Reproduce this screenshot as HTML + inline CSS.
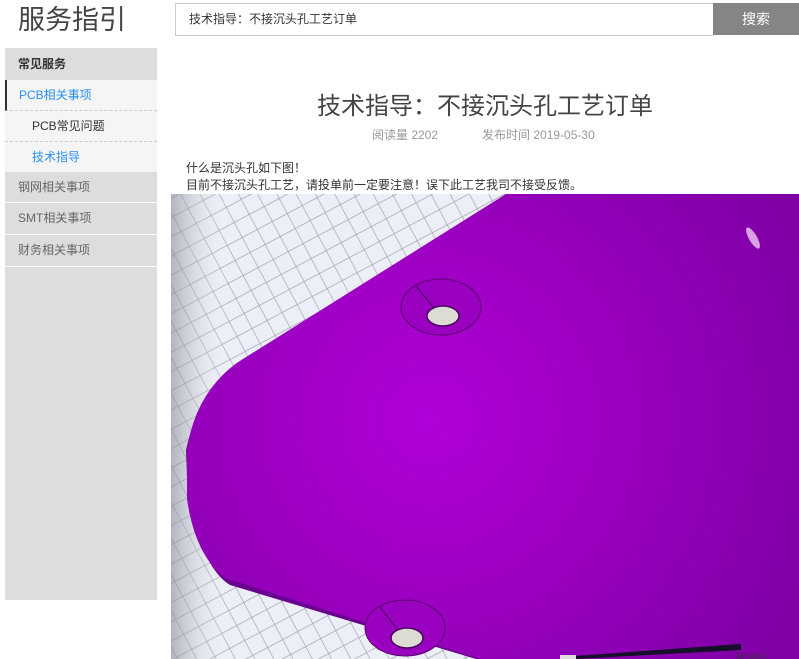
<!DOCTYPE html>
<html><head><meta charset="utf-8"><style>
*{margin:0;padding:0;box-sizing:border-box}
body{width:799px;height:659px;overflow:hidden;background:#fff;font-family:"Liberation Sans","Noto Sans CJK SC",sans-serif;position:relative;color:#333}
.abs{position:absolute}
.logo{left:18px;top:2px;font-size:27px;color:#444;line-height:36px}
.search{left:175px;top:3px;width:539px;height:33px;border:1px solid #ccc;font-size:12px;line-height:31px;padding-left:13px;color:#333}
.btn{left:713px;top:3px;width:86px;height:32px;background:#858585;color:#fff;font-size:14px;line-height:32px;text-align:center}
.side{left:5px;top:48px;width:152px;height:552px;background:#ddd}
.it{position:absolute;left:0;width:152px;font-size:12px;padding-left:13px}
.title{left:171px;width:628px;top:90px;text-align:center;font-size:24px;color:#444;line-height:34px}
.meta{top:127px;left:372px;font-size:12px;color:#999;line-height:16px}
.txt{left:186px;font-size:12px;line-height:16px;color:#333}
</style></head><body>
<div class="abs logo">服务指引</div>
<div class="abs search">技术指导：不接沉头孔工艺订单</div>
<div class="abs btn">搜索</div>
<div class="abs side">
<div class="it" style="top:1px;height:30px;line-height:30px;font-weight:bold;color:#333">常见服务</div>
<div class="it" style="top:32px;height:31px;line-height:31px;background:#f5f5f5;color:#2a8ef0;border-left:2px solid #333;padding-left:12px;border-bottom:1px dashed #ccc">PCB相关事项</div>
<div class="it" style="top:63px;height:31px;line-height:31px;background:#f5f5f5;padding-left:27px;border-bottom:1px dashed #ccc">PCB常见问题</div>
<div class="it" style="top:94px;height:30px;line-height:30px;background:#f5f5f5;padding-left:27px;color:#2a8ef0">技术指导</div>
<div class="it" style="top:124px;height:31px;line-height:31px;color:#666;border-bottom:1px solid #fff">钢网相关事项</div>
<div class="it" style="top:155px;height:32px;line-height:31px;color:#666;border-bottom:1px solid #fff">SMT相关事项</div>
<div class="it" style="top:187px;height:32px;line-height:31px;color:#666;border-bottom:1px solid #fff">财务相关事项</div>
</div>
<div class="abs title">技术指导：不接沉头孔工艺订单</div>
<div class="abs meta">阅读量 2202<span style="display:inline-block;width:44px"></span>发布时间 2019-05-30</div>
<div class="abs txt" style="top:160px">什么是沉头孔如下图！</div>
<div class="abs txt" style="top:177px">目前不接沉头孔工艺，请投单前一定要注意！误下此工艺我司不接受反馈。</div>
<svg class="abs" style="left:171px;top:194px" width="628" height="465" viewBox="171 194 628 465">
<defs>
<pattern id="g" width="17" height="17" patternUnits="userSpaceOnUse" patternTransform="rotate(-28)">
<rect width="17" height="17" fill="#eceff8"/>
<path d="M0 0H17M0 0V17" stroke="#a4a6b0" stroke-width="1.4"/>
</pattern>
<radialGradient id="p" cx="430" cy="420" r="420" gradientUnits="userSpaceOnUse">
<stop offset="0" stop-color="#b200d8"/><stop offset="1" stop-color="#7e00a4"/>
</radialGradient>
<linearGradient id="sh" x1="0" y1="0" x2="1" y2="0"><stop offset="0" stop-color="#8a8c96" stop-opacity=".6"/><stop offset="1" stop-color="#fff" stop-opacity="0"/></linearGradient>
</defs>
<rect x="171" y="194" width="628" height="465" fill="url(#g)"/>
<rect x="171" y="194" width="60" height="465" fill="url(#sh)"/>
<path d="M504 199 L799 199 L799 659 L476 659 L230 585 Q205 570 188 505 L186 450 Q200 385 243 359 Z" fill="#6a0090"/>
<path d="M506 194 L799 194 L799 659 L480 659 L225 578 Q195 555 187 499 L187 451 Q195 390 243 359 Z" fill="url(#p)"/>
<ellipse cx="441" cy="307" rx="40" ry="28" fill="#9a00c0" stroke="#5a0070" stroke-width="1"/>
<ellipse cx="443" cy="316" rx="16" ry="10" fill="#dcdcd4" stroke="#4a0060" stroke-width="1.5"/>
<line x1="416" y1="286" x2="434" y2="308" stroke="#4a0060"/>
<ellipse cx="405" cy="628" rx="40" ry="28" fill="#9a00c0" stroke="#5a0070" stroke-width="1"/>
<ellipse cx="407" cy="638" rx="16" ry="10" fill="#dcdcd4" stroke="#4a0060" stroke-width="1.5"/>
<line x1="380" y1="607" x2="398" y2="630" stroke="#4a0060"/>
<ellipse cx="753" cy="238" rx="4" ry="12" transform="rotate(-30 753 238)" fill="#f0c8f0" opacity=".8"/>
<path d="M575 656 L741 644 L741 650 L575 659 Z" fill="#15102a"/>
<rect x="560" y="655" width="16" height="4" fill="#ddd"/>
<text x="736" y="659" font-size="8" fill="#333" font-family="Liberation Sans">30 (mm)</text>
</svg>
</body></html>
